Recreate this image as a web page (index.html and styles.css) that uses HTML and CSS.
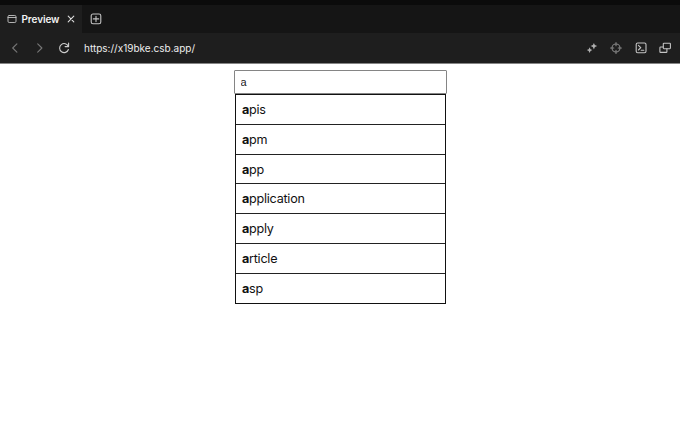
FILE: index.html
```html
<!DOCTYPE html>
<html lang="en">
<head>
<meta charset="utf-8">
<title>Preview</title>
<link rel="stylesheet" href="styles.css">
</head>
<body>
<header class="chrome">
  <div class="topline"></div>
  <div class="tabs">
    <div class="tab">
      <svg class="window-icon" viewBox="0 0 10 10"><rect x="1" y="1.5" width="8" height="7" rx="1.2"/><path d="M1 3.5h8"/></svg>
      <span class="tab-title">Preview</span>
      <svg class="close-icon" viewBox="0 0 8 8"><path d="M1.2 1.2l5.6 5.6M6.8 1.2L1.2 6.8"/></svg>
    </div>
    <svg class="add-icon" viewBox="0 0 12 12"><rect x="1.2" y="1" width="9.6" height="9.8" rx="1.8"/><path d="M6 3.2v5.4M3.3 5.9h5.4"/></svg>
  </div>
  <nav class="toolbar">
    <svg class="nav-icon dim" viewBox="0 0 12 12"><path d="M7.9 1.8L3.7 6l4.2 4.2"/></svg>
    <svg class="nav-icon dim" viewBox="0 0 12 12"><path d="M3.7 1.8L7.9 6l-4.2 4.2"/></svg>
    <svg class="nav-icon reload" viewBox="0 0 12 12"><path d="M10.6 1.1v3.5H7.1M10.3 4.4A4.5 4.5 0 1 0 10.4 7.5"/></svg>
    <span class="url">https://x19bke.csb.app/</span>
    <div class="actions">
      <svg class="spark" viewBox="0 0 12 12"><path d="M7.9 .9Q8.3 3.7 11.2 4.1Q8.3 4.6 7.9 7.4Q7.4 4.6 4.6 4.1Q7.4 3.7 7.9 .9ZM3.6 5.2Q4 7.7 6.4 8.1Q4 8.5 3.6 11Q3.2 8.5 .8 8.1Q3.2 7.7 3.6 5.2Z"/></svg>
      <svg class="target" viewBox="0 0 12 12"><circle cx="6" cy="6" r="4"/><path d="M6 .6v3.2M6 8.2v3.2M.6 6h3.2M8.2 6h3.2"/></svg>
      <svg viewBox="0 0 12 12"><rect x="1.2" y="1" width="9.8" height="9.8" rx="1.5"/><path d="M3.4 3.4L5.8 5.7 3.4 8M6.2 8.3h2.6"/></svg>
      <svg viewBox="0 0 12 12"><rect x="4.3" y="1.3" width="7.1" height="5.4" rx=".6"/><path d="M4.3 5H1.6q-.7 0-.7.7v4q0 .7.7.7h5.6q.7 0 .7-.7V6.7"/></svg>
    </div>
  </nav>
</header>
<main class="page">
  <input class="search" type="text" value="a" aria-label="Search">
  <ul class="suggestions">
    <li><b>a</b>pis</li>
    <li><b>a</b>pm</li>
    <li><b>a</b>pp</li>
    <li><b>a</b>pplication</li>
    <li><b>a</b>pply</li>
    <li><b>a</b>rticle</li>
    <li><b>a</b>sp</li>
  </ul>
</main>
</body>
</html>
```
FILE: styles.css
```css
* { box-sizing: border-box; }
body {
  margin: 0;
  height: 435px;
  overflow: hidden;
  background: #fff;
  font-family: Inter, "Liberation Sans", sans-serif;
}
svg {
  display: block;
  flex: none;
  width: 12px;
  height: 12px;
  fill: none;
  stroke: #c4c4c4;
  stroke-width: 1.1;
  stroke-linecap: round;
  stroke-linejoin: round;
}
.chrome { height: 64px; background: #1e1e1e; border-bottom: 1px solid #858585; }
.topline { height: 5px; background: #0b0b0b; }
.tabs { display: flex; align-items: center; height: 28px; background: #151515; }
.tab {
  display: flex;
  align-items: center;
  width: 82px;
  height: 28px;
  padding-left: 7px;
  background: #1e1e1e;
}
.window-icon { width: 10px; height: 10px; stroke-width: .9; }
.tab-title { width: 45.5px; margin-left: 4.5px; color: #f2f2f2; font-size: 10px; font-weight: 600; line-height: 14px; letter-spacing: -.1px; }
.close-icon { width: 8px; height: 8px; stroke: #ddd; }
.add-icon { margin-left: 8px; }
.toolbar { display: flex; align-items: center; height: 29px; padding: 0 9px; }
.nav-icon { margin-right: 12.5px; }
.dim { stroke: #777; }
.reload { margin-right: 14px; stroke: #ccc; }
.url { color: #ededed; font-size: 10px; line-height: 14px; }
.actions { display: flex; gap: 12.5px; margin-left: auto; }
.spark { fill: #b0b0b0; stroke: none; }
.target { stroke: #858585; }
.page { display: flex; flex-direction: column; align-items: center; padding-top: 6px; }
.search {
  width: 213px;
  height: 24px;
  margin: 0;
  padding: 0 6px 1px;
  border: 1px solid #858585;
  border-radius: 1px;
  outline: none;
  background: #fff;
  color: #222;
  font: 11px "Liberation Sans", Arial, sans-serif;
}
.suggestions {
  width: 211px;
  margin: 0;
  padding: 0;
  list-style: none;
  border: 1px solid #111;
}
.suggestions li {
  height: 29.75px;
  padding-left: 6.5px;
  border-bottom: 1px solid #222;
  color: #111;
  font-size: 12.6px;
  line-height: 30px;
  letter-spacing: -.25px;
}
.suggestions li:first-child { height: 29.8px; }
.suggestions li:last-child { height: 29.2px; border-bottom: 0; }
.suggestions b { font-weight: 700; }
```
